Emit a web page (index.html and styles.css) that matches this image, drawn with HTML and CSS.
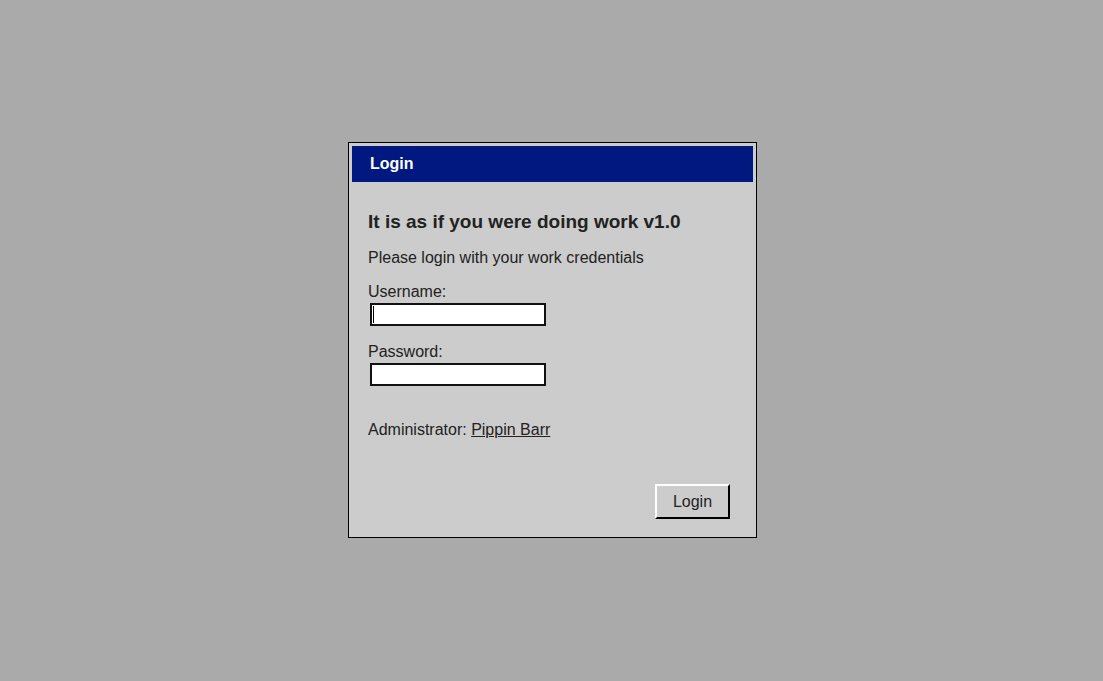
FILE: index.html
```html
<!DOCTYPE html>
<html>
<head>
    <meta charset="utf-8">
    <title>Login</title>
    <link rel="stylesheet" href="styles.css">
</head>
<body>
    <div class="window">
        <div class="title-bar">Login</div>
        <div class="content">
            <h1>It is as if you were doing work v1.0</h1>
            <p class="intro">Please login with your work credentials</p>
            <form>
                <label for="username">Username:</label>
                <input class="field caret" type="text" id="username" name="username">
                <label for="password">Password:</label>
                <input class="field" type="password" id="password" name="password">
                <p class="admin">Administrator: <a href="#">Pippin Barr</a></p>
                <div class="actions">
                    <button class="submit" type="button">Login</button>
                </div>
            </form>
        </div>
    </div>
</body>
</html>
```

FILE: styles.css
```css
html, body {
    height: 100%;
}
body {
    margin: 0;
    background: #aaaaaa;
    font-family: "Liberation Sans", Arial, Helvetica, sans-serif;
    color: #222222;
    display: flex;
    align-items: center;
    justify-content: center;
}
.window {
    width: 409px;
    height: 396px;
    box-sizing: border-box;
    border: 1px solid #000;
    background: #cccccc;
    padding: 3px;
    margin: -1px 0 0 2px;
}
.title-bar {
    background: #001880;
    color: #fff;
    font-weight: bold;
    font-size: 16px;
    height: 36px;
    line-height: 36px;
    padding-left: 18px;
}
.content {
    padding: 28px 16px 0 16px;
}
h1 {
    font-size: 19px;
    line-height: 24px;
    margin: 0 0 14px 0;
    color: #222;
}
.intro {
    font-size: 16px;
    line-height: 20px;
    margin: 0 0 14px 0;
}
label {
    display: block;
    font-size: 16px;
    line-height: 20px;
}
.field {
    display: block;
    width: 176px;
    height: 23px;
    box-sizing: border-box;
    margin: 1px 0 16px 2px;
    border: 2px solid #111;
    background: #fff;
    padding: 0;
}
.caret {
    background: linear-gradient(#000, #000) no-repeat 1px 1px / 1px 17px, #fff;
}
.admin {
    font-size: 16px;
    line-height: 20px;
    margin: 34px 0 0 0;
}
.admin a {
    color: #222;
    text-decoration: underline;
}
.actions {
    display: flex;
    justify-content: flex-end;
    margin-top: 44px;
    padding-right: 7px;
}
button.submit {
    font-family: "Liberation Sans", Arial, Helvetica, sans-serif;
    font-size: 16px;
    color: #222;
    background: #cccccc;
    width: 75px;
    height: 35px;
    border: 2px solid;
    border-color: #fff #000 #000 #fff;
    padding: 0;
}
```
